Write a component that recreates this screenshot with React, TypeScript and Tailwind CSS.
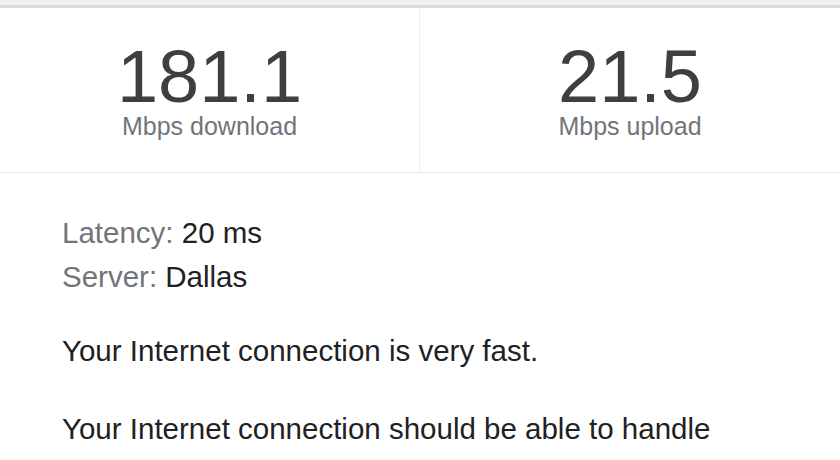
export default function App() {
  return (
    <div className="w-[840px] h-[460px] overflow-hidden bg-white font-['Liberation_Sans',Arial,sans-serif]">
      {/* top strip */}
      <div className="h-[5px] bg-[#f1f1f1]" />
      <div className="h-[3px] bg-[#dcdcdc]" />

      {/* speeds */}
      <div className="grid grid-cols-2 border-b border-[#ebebeb]">
        <div className="flex flex-col items-center pt-[32px] pb-[33px] border-r border-[#ececec]">
          <span className="text-[74px] leading-none text-[#3c4043]">181.1</span>
          <span className="text-[25px] leading-[25px] text-[#70757a]">Mbps download</span>
        </div>
        <div className="flex flex-col items-center pt-[32px] pb-[33px]">
          <span className="text-[74px] leading-none text-[#3c4043]">21.5</span>
          <span className="text-[25px] leading-[25px] text-[#70757a]">Mbps upload</span>
        </div>
      </div>

      {/* details */}
      <div className="px-[62px] pt-[38px] text-[29.5px] leading-[43.5px] text-[#202124]">
        <div>
          <span className="text-[#70757a]">Latency:</span> 20 ms
        </div>
        <div>
          <span className="text-[#70757a]">Server:</span> Dallas
        </div>
        <p className="mt-[31px]">Your Internet connection is very fast.</p>
        <p className="mt-[34px]">
          Your Internet connection should be able to handle multiple devices streaming HD videos, video conferencing and gaming at the same time.
        </p>
      </div>
    </div>
  );
}
